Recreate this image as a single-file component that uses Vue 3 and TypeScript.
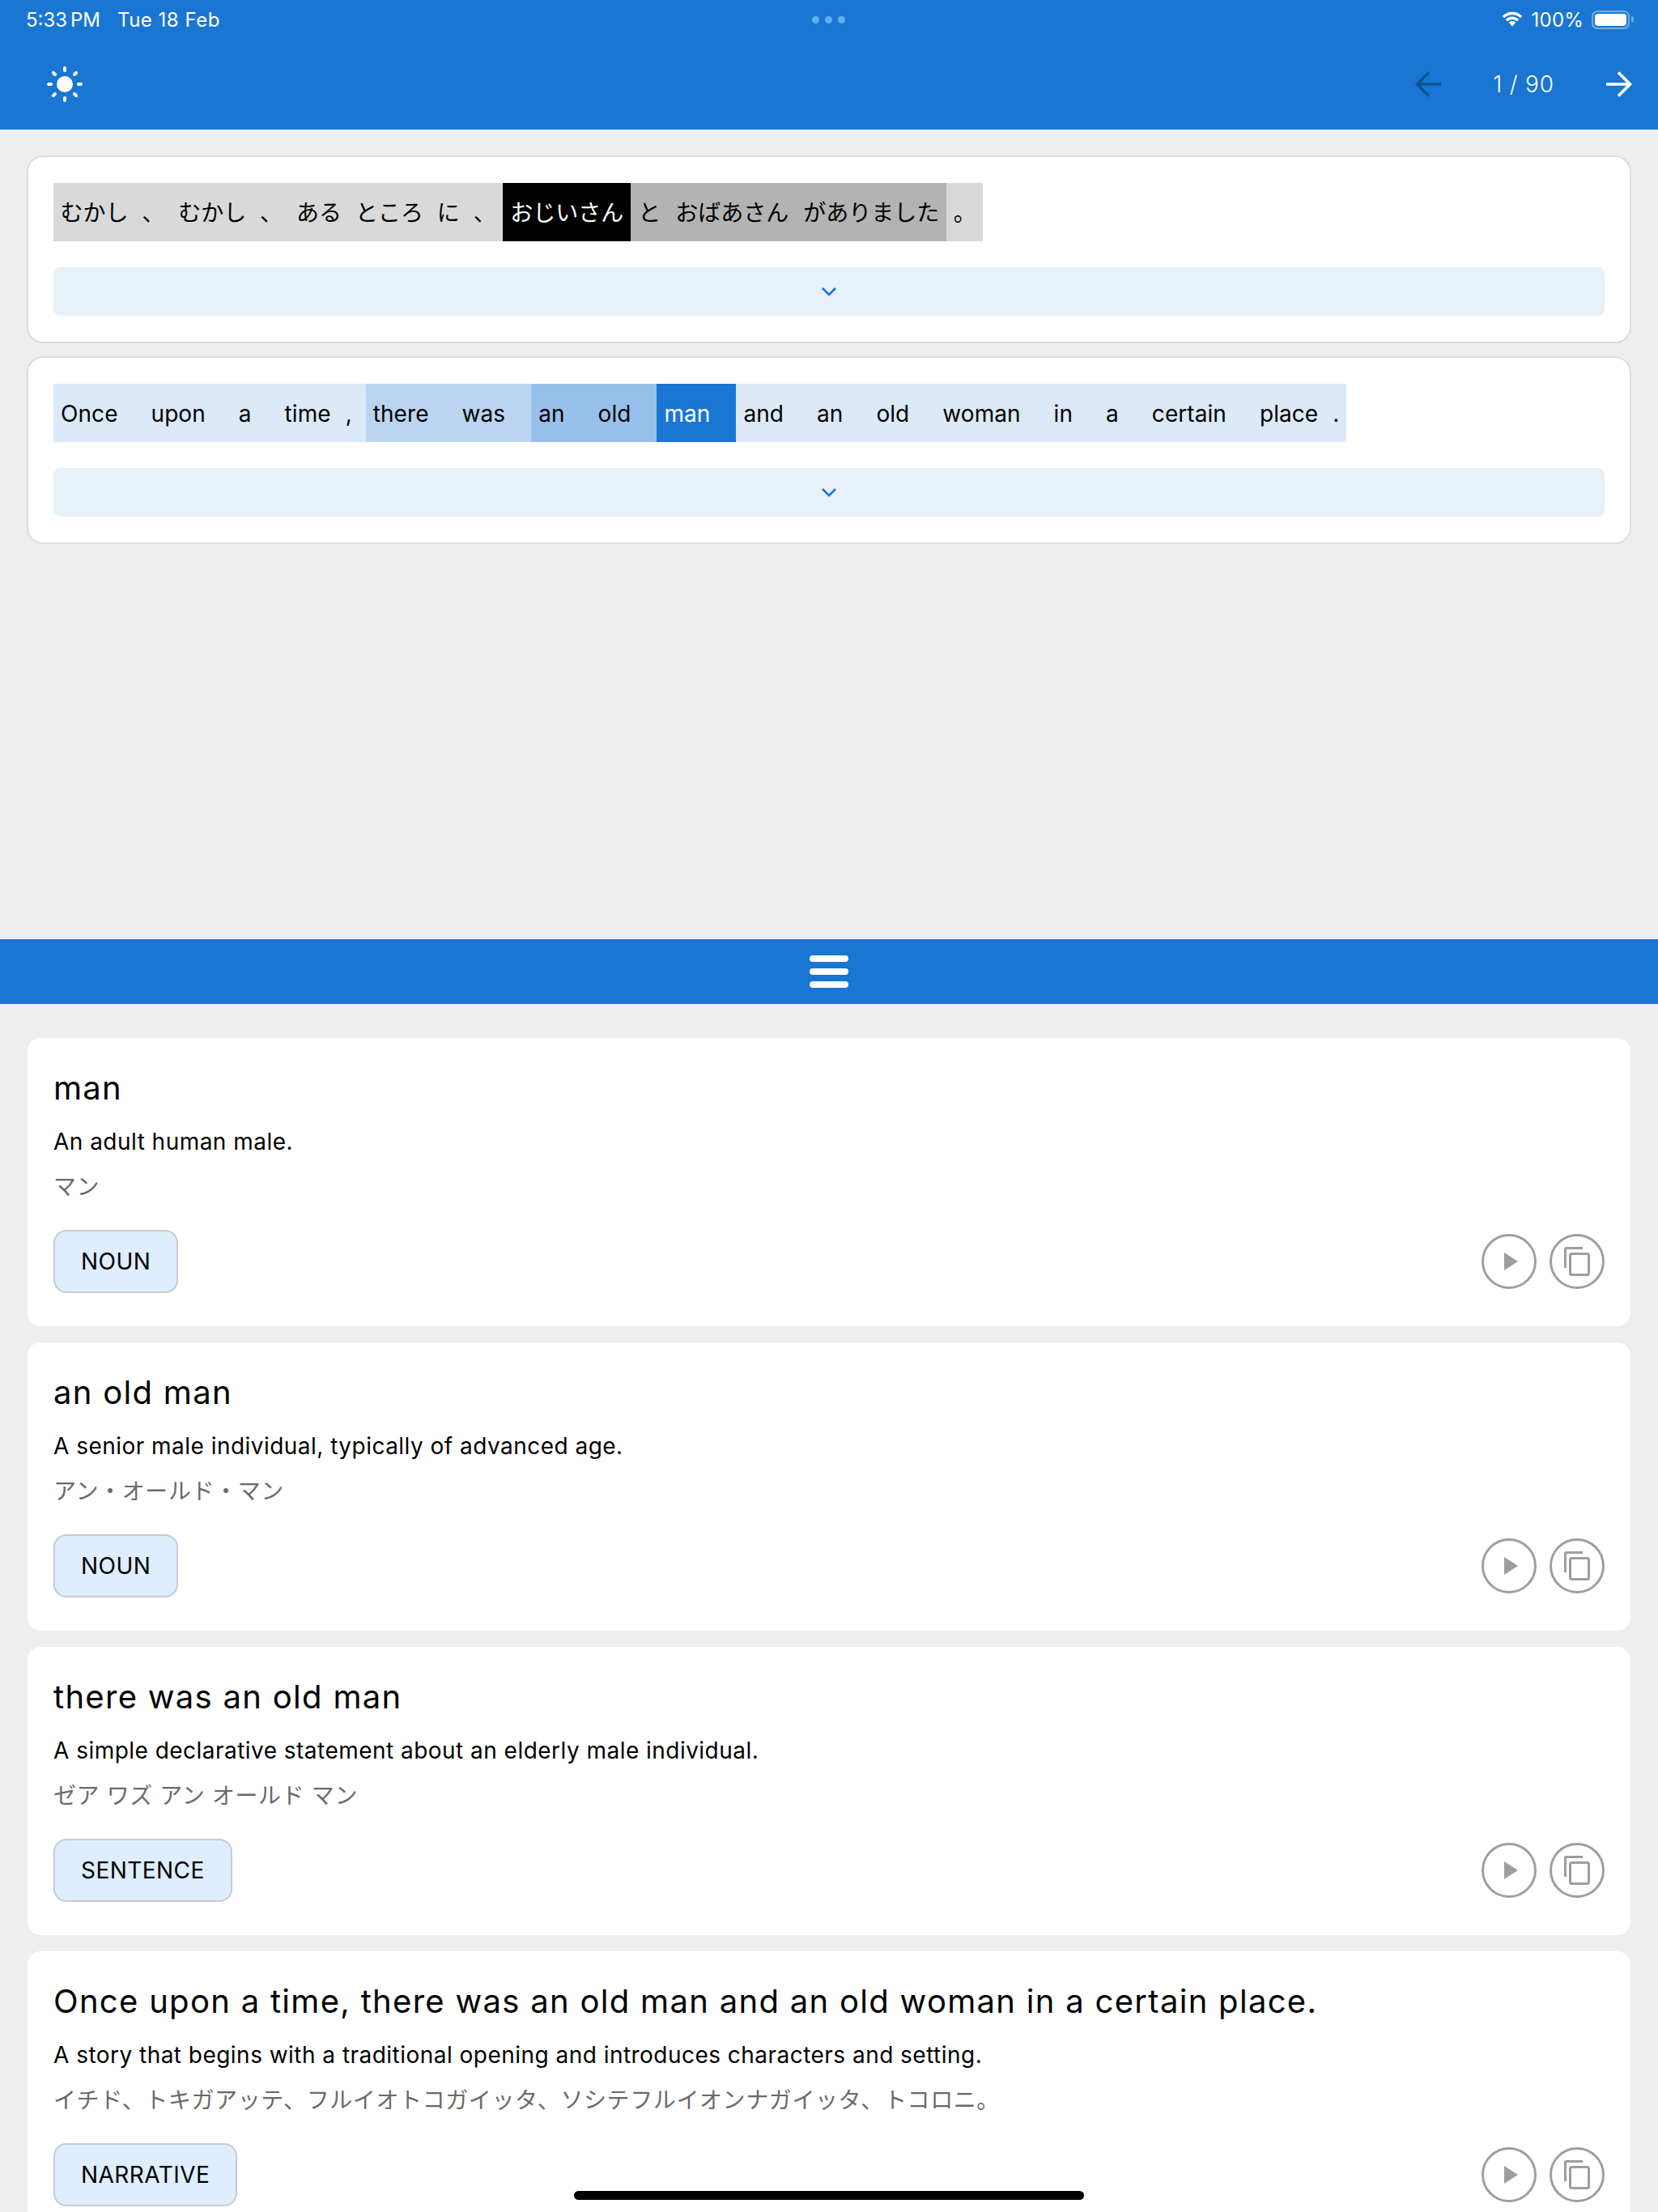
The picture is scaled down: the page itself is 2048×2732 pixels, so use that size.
<script setup lang="ts">
interface Tok { t: string; c: string; gap?: boolean; tail?: boolean }
const jp: Tok[] = [
  { t: 'むかし', c: 'g0' }, { t: '、', c: 'g0' }, { t: 'むかし', c: 'g0' }, { t: '、', c: 'g0' },
  { t: 'ある', c: 'g0' }, { t: 'ところ', c: 'g0' }, { t: 'に', c: 'g0' }, { t: '、', c: 'g0' },
  { t: 'おじいさん', c: 'g3' }, { t: 'と', c: 'g1' }, { t: 'おばあさん', c: 'g1' }, { t: 'がありました', c: 'g1' }, { t: '。', c: 'g0' },
]
const en: Tok[] = [
  { t: 'Once', c: 'b0', gap: true }, { t: 'upon', c: 'b0', gap: true }, { t: 'a', c: 'b0', gap: true }, { t: 'time', c: 'b0' }, { t: ',', c: 'b0', tail: true },
  { t: 'there', c: 'b1', gap: true }, { t: 'was', c: 'b1', gap: true }, { t: 'an', c: 'b2', gap: true }, { t: 'old', c: 'b2', gap: true }, { t: 'man', c: 'b3', gap: true },
  { t: 'and', c: 'b0', gap: true }, { t: 'an', c: 'b0', gap: true }, { t: 'old', c: 'b0', gap: true }, { t: 'woman', c: 'b0', gap: true }, { t: 'in', c: 'b0', gap: true },
  { t: 'a', c: 'b0', gap: true }, { t: 'certain', c: 'b0', gap: true }, { t: 'place', c: 'b0' }, { t: '.', c: 'b0' },
]
const entries = [
  { title: 'man', desc: 'An adult human male.', kana: 'マン', tag: 'NOUN' },
  { title: 'an old man', desc: 'A senior male individual, typically of advanced age.', kana: 'アン・オールド・マン', tag: 'NOUN' },
  { title: 'there was an old man', desc: 'A simple declarative statement about an elderly male individual.', kana: 'ゼア ワズ アン オールド マン', tag: 'SENTENCE' },
  { title: 'Once upon a time, there was an old man and an old woman in a certain place.', desc: 'A story that begins with a traditional opening and introduces characters and setting.', kana: 'イチド、トキガアッテ、フルイオトコガイッタ、ソシテフルイオンナガイッタ、トコロニ。', tag: 'NARRATIVE' },
]
const rays = [0, 45, 90, 135, 180, 225, 270, 315]
</script>

<template>
  <div class="screen">
    <header class="head">
      <div class="status">
        <div class="st-left"><span class="clock">5:33 PM</span><span class="date">Tue 18 Feb</span></div>
        <div class="dots"><i></i><i></i><i></i></div>
        <div class="st-right">
          <svg width="28" height="20" viewBox="0 0 28 20"><path d="M14 4.200c3.900 0 7.400 1.500 10 4l2.200-2.400C23 2.600 18.700.7 14 .7S5 2.600 1.800 5.800L4 8.200c2.600-2.500 6.100-4 10-4z" fill="#fff"/><path d="M14 10c2.300 0 4.400.9 6 2.400l2.200-2.400C20 7.900 17.200 6.600 14 6.600S8 7.900 5.800 10L8 12.400C9.600 10.900 11.700 10 14 10z" fill="#fff"/><path d="M14 12c-1.700 0-3.200.7-4.200 1.700L14 18.800l4.200-5.100C17.200 12.700 15.700 12 14 12z" fill="#fff"/></svg>
          <span class="pct">100%</span>
          <div class="batt"><div class="batt-fill"></div></div>
          <div class="nub"></div>
        </div>
      </div>
      <div class="tool">
        <svg width="44" height="44" viewBox="0 0 44 44">
          <circle cx="22" cy="22" r="10" fill="#fff"/>
          <rect v-for="r in rays" :key="r" x="20" y="0" width="4" height="7" rx="2" fill="#fff" :transform="`rotate(${r} 22 22)`"/>
        </svg>
        <div class="nav">
          <svg width="32" height="32" viewBox="0 0 32 32" fill="none" stroke="#0d5295" stroke-width="3.600"><path d="M32 16H2M17 1.500 2.500 16 17 30.500"/></svg>
          <span class="count">1 / 90</span>
          <svg width="32" height="32" viewBox="0 0 32 32" fill="none" stroke="#fff" stroke-width="3.600"><path d="M0 16h30M15 1.500 29.500 16 15 30.500"/></svg>
        </div>
      </div>
    </header>

    <section class="top">
      <div class="panel">
        <div class="tokens ja"><span v-for="(k, i) in jp" :key="i" class="tok" :class="k.c">{{ k.t }}</span></div>
        <div class="expand"><svg width="20" height="12" viewBox="0 0 20 12" fill="none" stroke="#1976d2" stroke-width="2.600"><path d="M2 2l8 8 8-8"/></svg></div>
      </div>
      <div class="panel">
        <div class="tokens latin"><span v-for="(k, i) in en" :key="i" class="tok" :class="[k.c, { gap: k.gap, tail: k.tail }]">{{ k.t }}</span></div>
        <div class="expand"><svg width="20" height="12" viewBox="0 0 20 12" fill="none" stroke="#1976d2" stroke-width="2.600"><path d="M2 2l8 8 8-8"/></svg></div>
      </div>
    </section>

    <div class="split"><div class="burger"><i></i><i></i><i></i></div></div>

    <section class="list">
      <article v-for="e in entries" :key="e.title" class="card">
        <h2>{{ e.title }}</h2>
        <p class="desc">{{ e.desc }}</p>
        <p class="kana">{{ e.kana }}</p>
        <div class="foot">
          <span class="tag">{{ e.tag }}</span>
          <div class="acts">
            <button class="act"><svg class="play" width="17" height="22" viewBox="0 0 17 22"><path d="M0 0v22l17-11z" fill="#9e9e9e"/></svg></button>
            <button class="act"><svg width="32" height="36" viewBox="0 0 32 36" fill="none" stroke="#9e9e9e" stroke-width="3"><path d="M1.500 26V2.800c0-.7.600-1.300 1.300-1.300H23"/><rect x="7.500" y="8.500" width="23" height="26" rx="2"/></svg></button>
          </div>
        </div>
      </article>
    </section>

    <div class="home"></div>
  </div>
</template>

<style scoped>
.screen {
  position: relative;
  width: 2048px;
  height: 2732px;
  overflow: hidden;
  display: flex;
  flex-direction: column;
  background: #eeeeee;
  font-family: Inter, "Noto Sans CJK JP", sans-serif;
  color: #000;
}
.head { height: 160px; background: #1976d2; flex: none; color: #fff; }
.status { height: 48px; display: flex; align-items: center; justify-content: space-between; padding: 0 30px 0 32px; font-size: 24px; position: relative; }
.st-left { display: flex; gap: 21px; }
.clock { word-spacing: -3px; }
.date { letter-spacing: .5px; }
.st-right { display: flex; align-items: center; }
.pct { margin: 0 10px; letter-spacing: .2px; }
.dots { position: absolute; left: 1003px; top: 20px; display: flex; gap: 7px; }
.dots i { width: 9px; height: 9px; border-radius: 50%; background: #5fb0f0; }
.batt { width: 47px; height: 23px; border: 2px solid #76ade4; border-radius: 7px; padding: 2px; box-sizing: border-box; }
.batt-fill { height: 100%; background: #fff; border-radius: 4px; }
.nub { width: 3px; height: 8px; background: #76ade4; border-radius: 0 3px 3px 0; margin-left: 2px; }
.tool { height: 112px; display: flex; align-items: center; justify-content: space-between; padding: 0 32px 0 58px; }
.nav { display: flex; align-items: center; }
.count { font-size: 28px; font-weight: 300; width: 204px; text-align: center; letter-spacing: .8px; }

.top { height: 1000px; flex: none; padding: 32px 33px 0; box-sizing: border-box; display: flex; flex-direction: column; gap: 16px; }
.panel { background: #fff; border: 2px solid #dcdcdc; border-radius: 20px; padding: 32px 31px; height: 232px; box-sizing: border-box; }
.tokens { display: flex; height: 72px; }
.tok { display: flex; align-items: center; padding: 0 9px; font-size: 28px; line-height: 72px; white-space: pre; box-sizing: border-box; height: 72px; }
.latin .tok { letter-spacing: .06px; padding-top: 2px; }
.tok.gap { padding-right: 32px; }
.tok.tail { padding-right: 17px; }
.ja .tok { padding-top: 2px; }
.ja .g0 { padding-left: 8.450px; padding-right: 8.450px; }
.g0 { background: #d9d9d9; }
.g1 { background: #b3b3b3; }
.g3 { background: #000; color: #fff; }
.b0 { background: #dce9f8; }
.b1 { background: #bbd5f1; }
.b2 { background: #97c1ec; }
.b3 { background: #1976d2; color: #fff; }
.expand { margin-top: 32px; height: 60px; background: #e8f0f9; border-radius: 8px; display: flex; align-items: center; justify-content: center; }

.split { height: 80px; flex: none; background: #1976d2; display: flex; align-items: center; justify-content: center; }
.burger { display: flex; flex-direction: column; gap: 8px; }
.burger i { display: block; width: 48px; height: 8px; border-radius: 4px; background: #fff; }

.list { padding: 42px 34px 0; display: flex; flex-direction: column; gap: 20px; }
.card { background: #fff; border-radius: 16px; height: 356px; flex: none; box-sizing: border-box; padding: 37px 32px 0; }
h2 { margin: 0; font-size: 40px; font-weight: 400; line-height: 50px; letter-spacing: 1.300px; }
.desc { margin: 24px 0 0; font-size: 28px; line-height: 34px; letter-spacing: .47px; }
.kana { margin: 22px 0 0; font-size: 28px; line-height: 34px; color: #6a6a6a; letter-spacing: .6px; }
.foot { display: flex; justify-content: space-between; align-items: center; margin-top: 36px; }
.tag { height: 78px; box-sizing: border-box; padding: 0 32px; display: flex; align-items: center; background: #deeefe; border: 2px solid #c5cad8; border-radius: 16px; font-size: 28px; letter-spacing: .45px; }
.acts { display: flex; gap: 16px; }
.act { width: 68px; height: 68px; padding: 0; background: none; border: 3px solid #9e9e9e; border-radius: 50%; display: flex; align-items: center; justify-content: center; box-sizing: border-box; }
.play { margin-left: 5px; }
.home { position: absolute; left: 709px; top: 2706px; width: 630px; height: 11px; background: #000; border-radius: 6px; }
</style>
